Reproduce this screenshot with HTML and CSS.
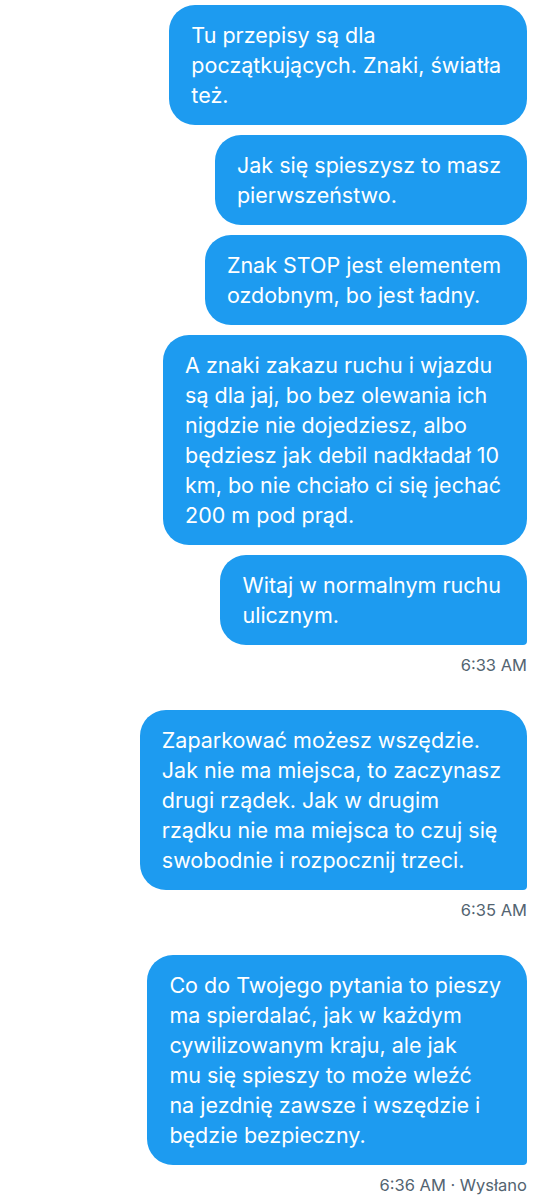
FILE: index.html
```html
<!DOCTYPE html>
<html lang="pl">
<head>
<meta charset="utf-8">
<link rel="stylesheet" href="styles.css">
</head>
<body>
<div class="thread">
  <div class="group">
    <div class="bubble">Tu przepisy są dla<br>początkujących. Znaki, światła<br>też.</div>
    <div class="bubble">Jak się spieszysz to masz<br>pierwszeństwo.</div>
    <div class="bubble">Znak STOP jest elementem<br>ozdobnym, bo jest ładny.</div>
    <div class="bubble">A znaki zakazu ruchu i wjazdu<br>są dla jaj, bo bez olewania ich<br>nigdzie nie dojedziesz, albo<br>będziesz jak debil nadkładał 10<br>km, bo nie chciało ci się jechać<br>200 m pod prąd.</div>
    <div class="bubble last">Witaj w normalnym ruchu<br>ulicznym.</div>
    <div class="time">6:33 AM</div>
  </div>
  <div class="group">
    <div class="bubble last">Zaparkować możesz wszędzie.<br>Jak nie ma miejsca, to zaczynasz<br>drugi rządek. Jak w drugim<br>rządku nie ma miejsca to czuj się<br>swobodnie i rozpocznij trzeci.</div>
    <div class="time">6:35 AM</div>
  </div>
  <div class="group">
    <div class="bubble last">Co do Twojego pytania to pieszy<br>ma spierdalać, jak w każdym<br>cywilizowanym kraju, ale jak<br>mu się spieszy to może wleźć<br>na jezdnię zawsze i wszędzie i<br>będzie bezpieczny.</div>
    <div class="time">6:36 AM · Wysłano</div>
  </div>
  <div class="next"></div>
</div>
</body>
</html>
```
FILE: styles.css
```css
html, body {
  margin: 0;
  padding: 0;
  background: #ffffff;
}
body {
  font-family: Inter, Roboto, sans-serif;
}
.thread {
  display: flex;
  flex-direction: column;
  align-items: flex-end;
  padding: 5px 21px 0 0;
  height: 1200px;
  box-sizing: border-box;
  overflow: hidden;
}
.group {
  display: flex;
  flex-direction: column;
  align-items: flex-end;
  gap: 10px;
  margin-bottom: 35px;
}
.group:last-of-type {
  margin-bottom: 3px;
}
.bubble {
  background: #1d9bf0;
  color: #ffffff;
  font-size: 21.5px;
  line-height: 30px;
  padding: 15px 26px 15px 22px;
  border-radius: 26px;
  white-space: nowrap;
}
.bubble.last {
  border-bottom-right-radius: 4px;
}
.time {
  font-size: 16.5px;
  line-height: 20px;
  color: #536471;
}
.next {
  width: 377px;
  height: 20px;
  background: #1d9bf0;
  flex-shrink: 0;
}
```
